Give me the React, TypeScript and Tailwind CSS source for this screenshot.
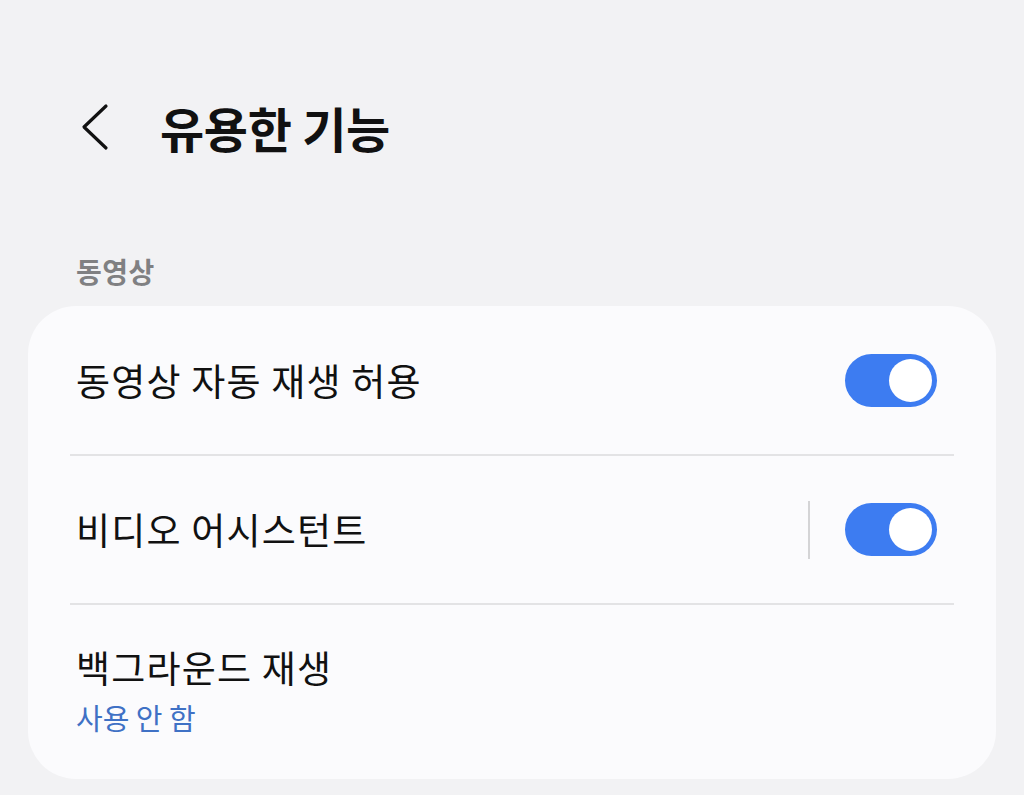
export default function App() {
  const font = { fontFamily: '"Noto Sans CJK KR", "Noto Sans", sans-serif' }
  return (
    <div className="min-h-screen bg-[#f2f2f4] px-[28px] pt-[97px]" style={font}>
      <div className="flex h-[60px] items-center">
        <svg className="ml-[50px] h-[48px] w-[32px]" viewBox="0 0 32 48" fill="none" stroke="#111" strokeWidth={3.2} strokeLinecap="round" strokeLinejoin="round">
          <path d="M28 3 L6 24 L28 45" />
        </svg>
        <h1 className="ml-[50px] text-[48px] font-bold leading-none tracking-[-0.3px] text-[#111]">유용한 기능</h1>
      </div>

      <div className="mt-[100px] pl-[48px] text-[28px] font-semibold leading-none tracking-[0.5px] text-[#808082]">동영상</div>

      <div className="mt-[21px] rounded-[48px] bg-[#fbfbfd] px-[42px]">
        <div className="flex h-[150px] items-center justify-between border-b-2 border-[#e3e3e5] pl-[6px] pr-[17px]">
          <span className="text-[37px] leading-none tracking-[1.2px] text-[#111]">동영상 자동 재생 허용</span>
          <Toggle />
        </div>

        <div className="flex h-[149px] items-center justify-between border-b-2 border-[#e3e3e5] pl-[6px] pr-[17px]">
          <span className="text-[37px] leading-none tracking-[1.2px] text-[#111]">비디오 어시스턴트</span>
          <div className="flex items-center">
            <div className="h-[58px] w-[2px] bg-[#d4d4d6]" />
            <div className="ml-[35px]">
              <Toggle />
            </div>
          </div>
        </div>

        <div className="flex h-[174px] flex-col pl-[6px] pt-[44px]">
          <span className="text-[37px] leading-none tracking-[1.2px] text-[#111]">백그라운드 재생</span>
          <span className="mt-[17px] text-[29px] leading-none text-[#3f71c5]">사용 안 함</span>
        </div>
      </div>
    </div>
  )
}

function Toggle() {
  return (
    <div className="flex h-[53px] w-[92px] items-center justify-end rounded-full bg-[#3d7cf1] pr-[5px]">
      <div className="h-[43px] w-[43px] rounded-full bg-white" />
    </div>
  )
}
